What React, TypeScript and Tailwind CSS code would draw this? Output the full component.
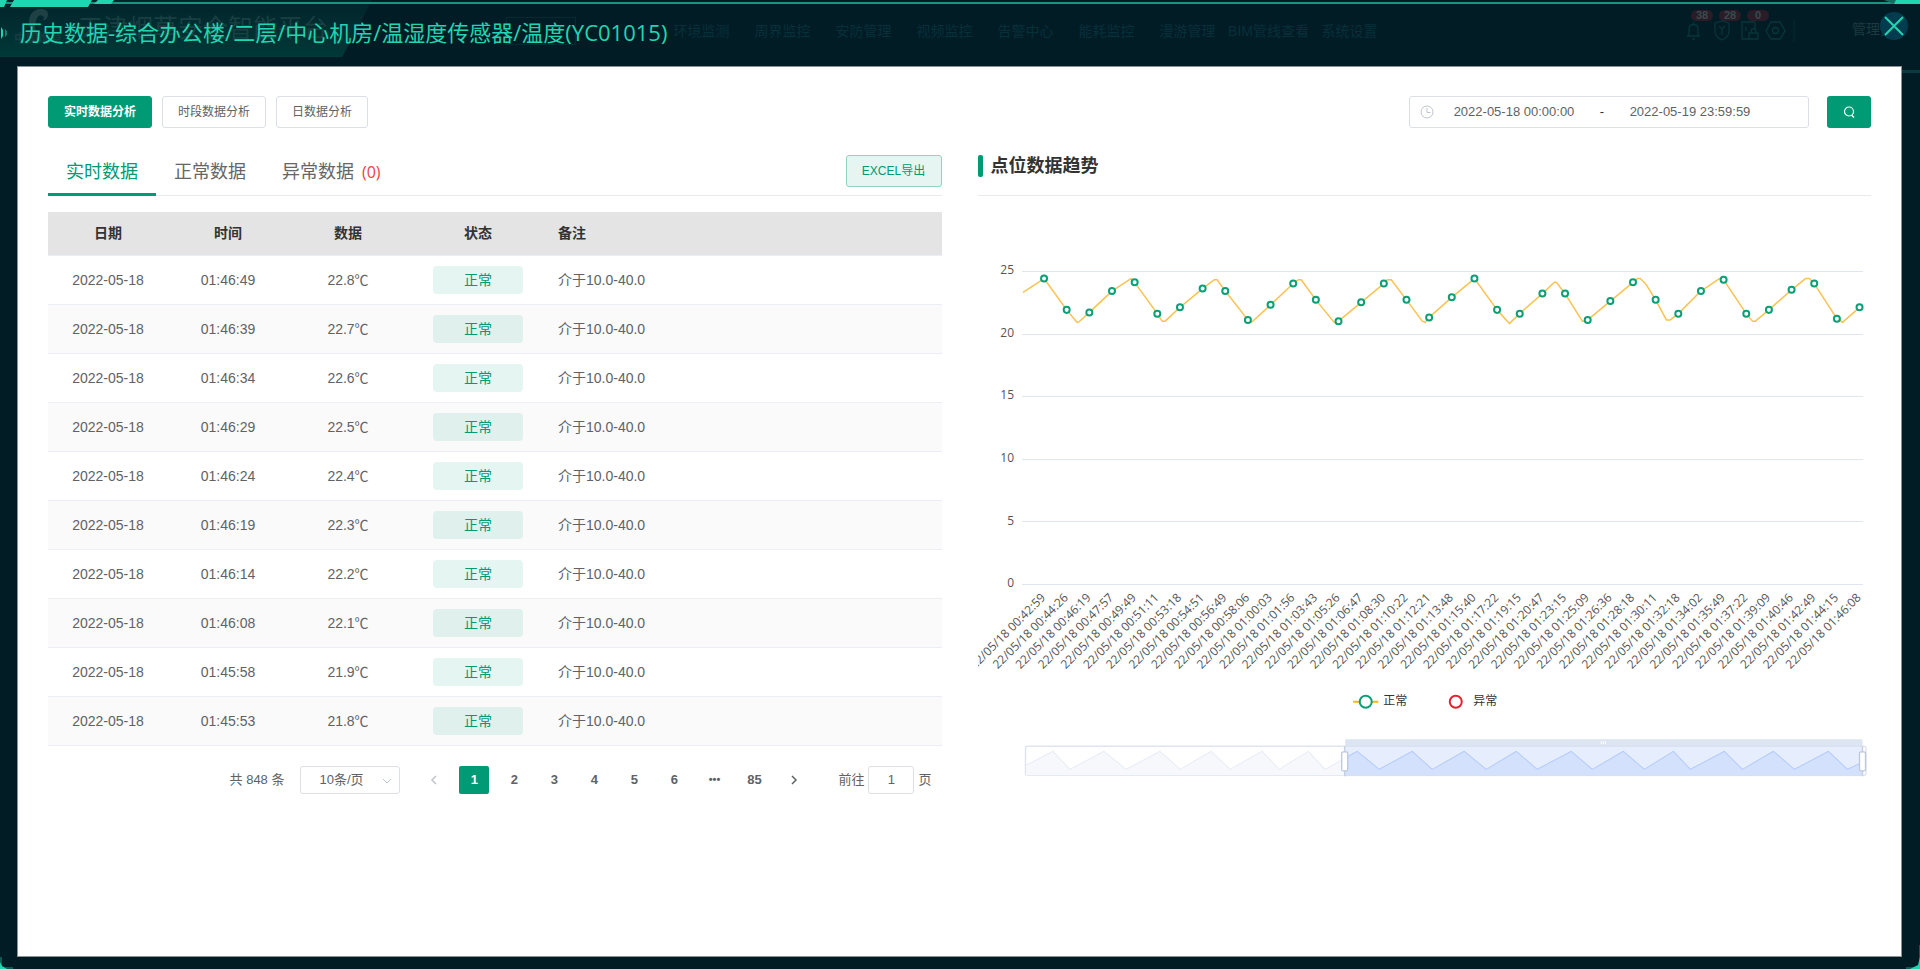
import { useState } from "react";
import clsx from "clsx";

const analysisModes = ["实时数据分析", "时段数据分析", "日数据分析"];

const navItems = ["环境监测", "周界监控", "安防管理", "视频监控", "告警中心", "能耗监控", "漫游管理", "BIM管线查看", "系统设置"];

const rows = [
  { time: "01:46:49", value: "22.8℃" },
  { time: "01:46:39", value: "22.7℃" },
  { time: "01:46:34", value: "22.6℃" },
  { time: "01:46:29", value: "22.5℃" },
  { time: "01:46:24", value: "22.4℃" },
  { time: "01:46:19", value: "22.3℃" },
  { time: "01:46:14", value: "22.2℃" },
  { time: "01:46:08", value: "22.1℃" },
  { time: "01:45:58", value: "21.9℃" },
  { time: "01:45:53", value: "21.8℃" },
];

const pages = ["1", "2", "3", "4", "5", "6", "•••", "85"];

const axisTimes = [
  "00:42:59", "00:44:26", "00:46:19", "00:47:57", "00:49:49", "00:51:11", "00:53:18", "00:54:51", "00:56:49", "00:58:06",
  "01:00:03", "01:01:56", "01:03:43", "01:05:26", "01:06:47", "01:08:30", "01:10:22", "01:12:21", "01:13:48", "01:15:40",
  "01:17:22", "01:19:15", "01:20:47", "01:23:15", "01:25:09", "01:26:36", "01:28:18", "01:30:11", "01:32:18", "01:34:02",
  "01:35:49", "01:37:22", "01:39:09", "01:40:46", "01:42:49", "01:44:15", "01:46:08",
];

// temperature at each axis label
const markers = [
  24.4, 21.9, 21.7, 23.4, 24.1, 21.6, 22.1, 23.6, 23.4, 21.1, 22.3, 24.0, 22.7, 21.0, 22.5, 24.0, 22.7, 21.3, 22.9, 24.4,
  21.9, 21.6, 23.2, 23.2, 21.1, 22.6, 24.1, 22.7, 21.6, 23.4, 24.3, 21.6, 21.9, 23.5, 24.0, 21.2, 22.1,
];

// turning points between the labelled samples: [x, temperature]
const turns = [
  [45, 23.3], [66, 24.4], [99, 20.9], [101, 20.95], [151, 24.3], [153, 24.4], [184, 21], [187, 21], [236, 24.3], [239, 24.3],
  [271, 20.9], [274, 20.95], [320, 24.3], [323, 24.3], [356, 20.9], [359, 20.9], [409, 24.3], [413, 24.3], [444, 21], [447, 20.9],
  [529, 21], [531, 20.8], [576, 24.1], [578, 24.1], [604, 21], [607, 21], [659, 24.4], [662, 24.4], [668, 23.9], [688, 21.1], [692, 21.1],
  [741, 24.4], [774, 21], [777, 21], [827, 24.4], [831, 24.4], [861, 21.1], [864, 20.9],
];

const scaleMarks = [25, 20, 15, 10, 5, 0];
const toY = (v: number) => 389 - v * 12.52;
const toX = (i: number) => 66 + i * 22.64;

const linePoints = [...turns, ...markers.map((v, i) => [toX(i), v])]
  .sort((a, b) => a[0] - b[0])
  .map(([x, v]) => `${x},${toY(v)}`)
  .join(" ");

// outline of the overview strip: high and low turns in order
const overviewX = [
  48, 75, 92, 126, 148, 182, 202, 233, 252, 284, 301, 330, 347, 379, 401, 434, 454, 486, 508, 538, 559, 593, 614, 645, 666,
  695, 712, 746, 764, 795, 816, 850, 869, 884,
];
const overviewPoints = overviewX
  .map((x, i) => `${x},${i === 0 ? 570 : i === overviewX.length - 1 ? 567 : i % 2 ? 556 : 574}`)
  .join(" ");

function TrendChart() {
  return (
    <svg viewBox="0 1 893 600" className="block w-full" role="img" aria-label="点位数据趋势">
      <g className="font-['Open_Sans','Noto_Sans_CJK_SC',sans-serif] text-xs">
        {scaleMarks.map((v) => (
          <g key={v}>
            <path d={`M44 ${Math.round(toY(v)) + 0.5}h841`} stroke="#dfe5f1" shapeRendering="crispEdges" />
            <text x="36" y={toY(v) + 3} textAnchor="end" fill="#555">{v}</text>
          </g>
        ))}
        {axisTimes.map((t, i) => (
          <text
            key={t}
            transform={`translate(${toX(i) - 1} 400) rotate(-45)`}
            textAnchor="end"
            dominantBaseline="central"
            fill="#555"
          >
            22/05/18 {t}
          </text>
        ))}
        <polyline points={linePoints} fill="none" stroke="#f9c252" strokeWidth="1.5" strokeLinejoin="round" />
        {markers.map((v, i) => (
          <circle key={i} cx={toX(i)} cy={toY(v)} r="3" fill="#fff" stroke="#0aa077" strokeWidth="2" />
        ))}

        {/* legend */}
        <path d="M375 506.5h25" stroke="#f7b51e" strokeWidth="2" />
        <circle cx="387.5" cy="506.5" r="6" fill="#fff" stroke="#0aa077" strokeWidth="2" />
        <text x="405" y="510" fill="#333">正常</text>
        <circle cx="477.5" cy="506.5" r="6" fill="#fff" stroke="#e6202e" strokeWidth="2" />
        <text x="495" y="510" fill="#333">异常</text>
      </g>

      {/* zoom slider */}
      <rect x="47.5" y="551" width="840" height="29" rx="2" fill="#fff" stroke="#dfe4f3" strokeWidth="1.5" />
      <polygon points={`48,580 ${overviewPoints} 884,580`} fill="#f6f8fc" />
      <polyline points={overviewPoints} fill="none" stroke="#e8ecf6" strokeLinejoin="round" />
      <rect x="367" y="544" width="517" height="7" rx="1" fill="#dce5f1" />
      <svg x="367" y="551" width="517" height="30" viewBox="367 551 517 30">
        <rect x="367" y="551" width="517" height="30" fill="#e6eefe" />
        <polygon points={`48,581 ${overviewPoints} 884,581`} fill="#d4e1fd" />
        <polyline points={overviewPoints} fill="none" stroke="#b4cbfa" strokeLinejoin="round" />
      </svg>
      <path d="M367 551h517M367 580h517" stroke="#d6e0f0" />
      <path d="M623 546v3M625 546v3M627 546v3" stroke="#fff" />
      <path d="M366.5 551v30M884 551v30" stroke="#c4cfe0" strokeWidth="1.5" />
      <rect x="363.5" y="556.5" width="6" height="19" rx="1.5" fill="#fff" stroke="#bcc7da" strokeWidth="1.3" />
      <rect x="881" y="556.5" width="6" height="19" rx="1.5" fill="#fff" stroke="#bcc7da" strokeWidth="1.3" />
    </svg>
  );
}

function DimmedHeader() {
  return (
    <div className="absolute inset-0 overflow-hidden" aria-hidden="true">
      <div className="absolute inset-y-0 left-0 h-[57px] w-[372px] bg-linear-to-b from-[#02242b] to-[#003937] [clip-path:polygon(0_0,100%_0,92%_100%,0_100%)]" />
      <div className="absolute inset-x-0 top-0.5 h-0.5 bg-[#1a9480]" />
      <svg className="absolute top-0 left-0" width="120" height="60">
        <path d="M0 0h7l-3 7H0zM14 0h78l-4 7H10zM98 0h16l-3 4H94z" fill="#20d6b0" />
        <path d="M1 27l2 3v6l-2 3z" fill="#20d6b0" />
        <path d="M5 29l2 2v4l-2 2z" fill="#0f8272" />
        <path d="M47 11c-8-5-18 0-18 11 0 8 4 12 11 14-5-5-6-9-4-15 1-5 4-8 8-4-1 3-1 4 1 3 3-2 4-6 2-9z" fill="#1f4146" />
      </svg>
      <svg className="absolute top-0 right-0" width="60" height="8">
        <path d="M24 0h36v4H34z" fill="#137061" />
        <path d="M36 0h24v4H34z" fill="#20d6b0" />
      </svg>
      <div className="absolute top-[31px] left-3.5 text-xs leading-4 font-bold text-[#1a3c41]">中国烟草</div>
      <div className="absolute top-[10px] left-[78px] text-[25px] leading-9 text-[#1a3f43]">天津烟草安全智能平台</div>
      <div className="absolute top-[17px] left-[506px] h-7 w-[70px] border border-[#052b32]" />
      <div className="absolute top-[19px] left-[661px] flex text-sm leading-6 text-[#06303a]">
        {navItems.map((item) => (
          <span key={item} className="w-[81px] text-center whitespace-nowrap">{item}</span>
        ))}
      </div>
      <div className="absolute top-2.5 right-[151px] flex gap-1.5 text-[11px] leading-[11px] font-bold text-[#3c494f]">
        {["38", "28", "0"].map((n) => (
          <span key={n} className="w-[22px] rounded-full bg-[#2a1d27] text-center">{n}</span>
        ))}
      </div>
      <svg className="absolute top-5 right-[125px]" width="110" height="22" fill="none" stroke="#08353b" strokeWidth="1.3">
        <path d="M2 16h13M4 16V9c0-6 9-6 9 0v7M7 19h3M8.500 4V2" />
        <path d="M30 3l7-2 7 2v9c0 4-3 6-7 8-4-2-7-4-7-8zM34 6l3 3 3-3M37 9v6" />
        <path d="M64 19h-7V2h13v8M61 7v4M64 13h9v6h-9zM66 13v-2c0-3 5-3 5 0v2" />
        <path d="M86 2h9l5 9-5 8h-9l-5-8z" />
        <circle cx="90.500" cy="10.500" r="3" />
        <path d="M109 0v22" stroke="#052930" />
      </svg>
      <span className="absolute top-[17px] right-[26px] text-sm leading-6 text-[#1c3a40]">管理员</span>
    </div>
  );
}

// glowing corners and the side bar of the dimmed page frame
function FrameAccents() {
  return (
    <div className="pointer-events-none absolute inset-0" aria-hidden="true">
      <div className="absolute top-[70px] right-0 h-[3px] w-[18px] bg-[#063c3f]" />
      <svg className="absolute bottom-0 left-0" width="14" height="12">
        <path d="M0 0h2v10h11v2H0z" fill="#0d5a52" />
        <path d="M0 5l2 4 5 3H0z" fill="#20d6b0" />
      </svg>
      <svg className="absolute right-0 bottom-0" width="16" height="24">
        <path d="M16 0h-1v20l-2 2H2v2h14z" fill="#0d5a52" />
        <path d="M16 12l-2 8-8 4h10z" fill="#20d6b0" />
      </svg>
    </div>
  );
}

function PointTable() {
  return (
    <table className="mt-4 w-full table-fixed border-collapse text-sm text-[#606266]">
      <colgroup>
        <col className="w-[120px]" />
        <col className="w-[120px]" />
        <col className="w-[120px]" />
        <col className="w-[140px]" />
        <col />
      </colgroup>
      <thead>
        <tr className="h-[43px] border-b border-[#ebeef5] bg-[#e4e4e4] text-[#333]">
          <th>日期</th>
          <th>时间</th>
          <th>数据</th>
          <th>状态</th>
          <th className="pl-2.5 text-left">备注</th>
        </tr>
      </thead>
      <tbody>
        {rows.map((row) => (
          <tr key={row.time} className="h-[49px] border-b border-[#ebeef5] text-center even:bg-[#fafafa]">
            <td>2022-05-18</td>
            <td>{row.time}</td>
            <td>{row.value}</td>
            <td>
              <span className="mx-auto block h-7 w-[90px] rounded bg-[#009a74]/10 leading-7 text-[#009a74]">正常</span>
            </td>
            <td className="pl-2.5 text-left">介于10.0-40.0</td>
          </tr>
        ))}
      </tbody>
    </table>
  );
}

function Pagination() {
  const [page, setPage] = useState("1");

  return (
    <nav aria-label="分页" className="mt-5 flex h-7 items-center justify-end pr-2.5 text-[13px] text-[#606266]">
      <span className="mr-4">共 848 条</span>
      <span className="relative mr-[19px]">
        <select
          aria-label="每页条数"
          className="h-7 w-[100px] appearance-none rounded-[3px] border border-[#dcdfe6] bg-white pl-[18px]"
        >
          <option>10条/页</option>
          <option>20条/页</option>
        </select>
        <svg className="pointer-events-none absolute top-2.5 right-2" width="10" height="10" fill="none" stroke="#c0c4cc">
          <path d="M1 3l4 4 4-4" />
        </svg>
      </span>
      <div className="flex gap-2.5 font-bold">
        <button aria-label="上一页" className="flex h-7 w-[30px] items-center justify-center text-[#c0c4cc]">
          <svg width="8" height="10" fill="none" stroke="currentColor" strokeWidth="1.5">
            <path d="M6 1L2 5l4 4" />
          </svg>
        </button>
        {pages.map((p) => (
          <button
            key={p}
            onClick={() => setPage(p)}
            className={clsx(
              "h-7 w-[30px] rounded-xs",
              p === page && "bg-[#009a74] text-white",
              p === "•••" && "text-[11px]"
            )}
          >
            {p}
          </button>
        ))}
        <button aria-label="下一页" className="flex h-7 w-[30px] items-center justify-center">
          <svg width="8" height="10" fill="none" stroke="currentColor" strokeWidth="1.5">
            <path d="M2 1l4 4-4 4" />
          </svg>
        </button>
      </div>
      <label className="ml-[29px] flex items-center">
        前往
        <input defaultValue="1" className="mx-1 h-7 w-[46px] rounded-[3px] border border-[#dcdfe6] text-center" />
        页
      </label>
    </nav>
  );
}

export default function App() {
  const [mode, setMode] = useState(analysisModes[0]);

  return (
    <div className="relative flex min-h-screen flex-col bg-[#021c26] font-['Liberation_Sans','Noto_Sans_CJK_SC',sans-serif]">
      <FrameAccents />
      <header className="relative h-[66px]">
        <DimmedHeader />
        <div className="relative flex h-full items-start justify-between pl-5">
          <h1 className="mt-3.5 font-['Open_Sans','Noto_Sans_CJK_SC',sans-serif] text-[22px] leading-9 text-[#20d6b0]">
            历史数据-综合办公楼/二层/中心机房/温湿度传感器/温度(YC01015)
          </h1>
          <button aria-label="关闭" className="mt-3 mr-3 flex size-7 items-center justify-center rounded-full bg-[#033c4e]">
            <svg width="20" height="20" fill="none" stroke="#20d6b0" strokeWidth="2">
              <path d="M1 1l18 18M19 1L1 19" />
            </svg>
          </button>
        </div>
      </header>

      <main className="mr-[18px] mb-3 ml-[17px] flex-1 border border-[#8b9294] bg-white px-[30px] pt-[29px]">
        <div className="flex items-center justify-between">
          <div className="flex gap-2.5 text-xs">
            {analysisModes.map((m) => (
              <button
                key={m}
                onClick={() => setMode(m)}
                className={clsx(
                  "h-8 rounded-[3px] border px-[15px]",
                  m === mode ? "border-[#009a74] bg-[#009a74] font-bold text-white" : "border-[#dcdfe6] text-[#606266]"
                )}
              >
                {m}
              </button>
            ))}
          </div>
          <div className="flex items-center gap-[18px]">
            <div className="flex h-8 w-[400px] items-center rounded-[3px] border border-[#dcdfe6] px-2.5 text-[13px] text-[#606266]">
              <svg className="mr-0.5" width="14" height="14" fill="none" stroke="#c0c4cc">
                <circle cx="7" cy="7" r="6" />
                <path d="M7 3v4.500h3.500" />
              </svg>
              <input aria-label="开始时间" defaultValue="2022-05-18 00:00:00" className="w-[156px] text-center" />
              <span className="w-5 text-center text-[#303133]">-</span>
              <input aria-label="结束时间" defaultValue="2022-05-19 23:59:59" className="w-[156px] text-center" />
            </div>
            <button aria-label="查询" className="flex h-8 w-11 items-center justify-center rounded-[3px] bg-[#009a74]">
              <svg width="12" height="12" fill="none" stroke="#fff" strokeWidth="1.2">
                <circle cx="6" cy="5.500" r="4.500" />
                <path d="M8.500 9l2.500 2.500" />
              </svg>
            </button>
          </div>
        </div>

        <div className="mt-[22px] grid grid-cols-2 gap-9">
          <section>
            <div className="flex h-[46px] items-start border-b border-[#e8e9eb] text-lg text-[#666]">
              <button className="h-[46px] border-b-3 border-[#009a74] px-[18px] text-[#009a74]">实时数据</button>
              <button className="h-[46px] border-b-3 border-transparent px-[18px]">正常数据</button>
              <button className="flex h-[46px] items-center border-b-3 border-transparent px-[18px]">
                异常数据
                <span className="ml-2 font-['Open_Sans',sans-serif] text-base leading-5 text-[#f03e3e]">(0)</span>
              </button>
              <button className="mt-[5px] ml-auto h-8 w-24 rounded-[3px] border border-[#8fd4c2] bg-[#e6f5f1] text-xs text-[#009a74]">
                EXCEL导出
              </button>
            </div>
            <PointTable />
            <Pagination />
          </section>

          <section>
            <div className="flex h-[46px] items-start border-b border-[#e8e9eb] pt-[5px]">
              <span className="h-[22px] w-[5px] rounded-xs bg-[#009a74]" />
              <h2 className="ml-2 text-lg leading-[22px] font-bold text-[#333]">点位数据趋势</h2>
            </div>
            <TrendChart />
          </section>
        </div>
      </main>
    </div>
  );
}
